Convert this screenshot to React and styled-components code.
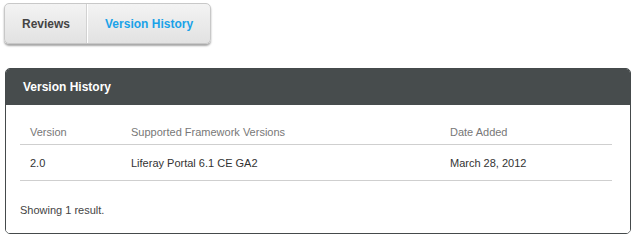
import React from "react";
import styled, { createGlobalStyle } from "styled-components";

const Global = createGlobalStyle`
  body {
    margin: 0;
    background: #fff;
    font-family: "Liberation Sans", Arial, sans-serif;
  }
`

const Page = styled.div`
  padding: 3px 4px 0 5px;
`

const Tabs = styled.div`
  display: inline-flex;
  margin-left: -1px;
  border: 1px solid #c8c8c8;
  border-radius: 5px;
  background: linear-gradient(#f3f3f3, #e2e2e2);
  box-shadow: 0 2px 2px rgba(0, 0, 0, 0.35);
  overflow: hidden;
`

const Tab = styled.div`
  display: flex;
  align-items: center;
  height: 39px;
  padding: 0 17px;
  font-size: 12px;
  font-weight: bold;
  color: ${p => (p.$active ? "#1aa2e8" : "#444")};
  & + & {
    border-left: 1px solid #fff;
    box-shadow: -1px 0 0 #d2d2d2;
  }
`

const Panel = styled.div`
  margin-top: 24px;
  border-radius: 5px;
  overflow: hidden;
  border: 1px solid #454a4b;
`

const PanelHead = styled.div`
  background: #474c4d;
  color: #fff;
  font-size: 12px;
  font-weight: bold;
  height: 36px;
  display: flex;
  align-items: center;
  padding-left: 17px;
`

const PanelBody = styled.div`
  background: #fff;
  padding: 14px 18px 17px 14px;
`

const Table = styled.table`
  width: 100%;
  border-collapse: collapse;
  font-size: 11px;
  th, td {
    text-align: left;
    padding: 0 10px;
    height: 35px;
    border-bottom: 1px solid #cfcfcf;
  }
  th {
    font-weight: normal;
    color: #777;
    height: 25px;
  }
  td {
    color: #333;
  }
`

const Foot = styled.div`
  margin-top: 23px;
  font-size: 11px;
  color: #444;
`

export default function App() {
  return (
    <Page>
      <Global />
      <Tabs>
        <Tab>Reviews</Tab>
        <Tab $active>Version History</Tab>
      </Tabs>
      <Panel>
        <PanelHead>Version History</PanelHead>
        <PanelBody>
          <Table>
            <thead>
              <tr>
                <th style={{ width: 81 }}>Version</th>
                <th style={{ width: 299 }}>Supported Framework Versions</th>
                <th>Date Added</th>
              </tr>
            </thead>
            <tbody>
              <tr>
                <td>2.0</td>
                <td>Liferay Portal 6.1 CE GA2</td>
                <td>March 28, 2012</td>
              </tr>
            </tbody>
          </Table>
          <Foot>Showing 1 result.</Foot>
        </PanelBody>
      </Panel>
    </Page>
  );
}
